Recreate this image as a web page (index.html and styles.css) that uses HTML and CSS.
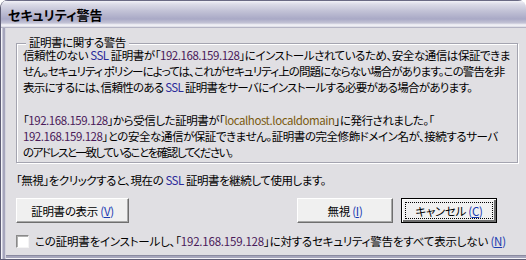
FILE: index.html
```html
<!DOCTYPE html>
<html lang="ja">
<head>
  <meta charset="UTF-8">
  <title>セキュリティ警告</title>
  <link rel="stylesheet" href="styles.css">
</head>
<body>
  <div class="window">
    <div class="titlebar">セキュリティ警告</div>
    <div class="client">
      <div class="group">
        <div class="group-title">証明書に関する警告</div>
        <p class="para">
          <span class="ln">信頼性のない <span class="ssl">SSL</span> 証明書が「<span class="ip">192.168.159.128</span>」にインストールされているため、安全な通信は保証できま</span>
          <span class="ln tight">せん。セキュリティ ポリシーによっては、これがセキュリティ上の問題にならない場合があります。この警告を非</span>
          <span class="ln snug">表示にするには、信頼性のある <span class="ssl">SSL</span> 証明書をサーバにインストールする必要がある場合があります。</span>
        </p>
        <p class="para second">
          <span class="ln">「<span class="ip">192.168.159.128</span>」から受信した証明書が「<span class="host">localhost.localdomain</span>」に発行されました。「</span>
          <span class="ln"><span class="ip">192.168.159.128</span>」との安全な通信が保証できません。証明書の完全修飾ドメイン名が、接続するサーバ</span>
          <span class="ln narrow">のアドレスと一致していることを確認してください。</span>
        </p>
      </div>
      <p class="note">「無視」をクリックすると、現在の <span class="ssl">SSL</span> 証明書を継続して使用します。</p>
      <div class="buttons">
        <button class="btn btn-view">証明書の表示 <span class="key">(<u>V</u>)</span></button>
        <button class="btn btn-ignore">無視 <span class="key">(<u>I</u>)</span></button>
        <button class="btn btn-cancel">キャンセル <span class="key">(<u>C</u>)</span></button>
      </div>
      <label class="check">
        <span class="box"></span>
        <span>この証明書をインストールし、「<span class="ip">192.168.159.128</span>」に対するセキュリティ警告をすべて表示しない <span class="key">(<u>N</u>)</span></span>
      </label>
    </div>
  </div>
</body>
</html>
```

FILE: styles.css
```css
body {
  margin: 0;
  background: #ffffff;
  font-family: "Noto Sans CJK JP", sans-serif;
  font-size: 11.5px;
  letter-spacing: -0.45px;
  color: #000;
}
.window {
  width: 526px;
  height: 260px;
  box-sizing: border-box;
  display: flex;
  flex-direction: column;
  background: #e0dfe3;
  border-left: 1px solid #5e5e76;
  border-bottom: 1px solid #5e5e76;
  border-radius: 8px 8px 0 0;
  overflow: hidden;
  box-shadow: inset 1px 0 #f4f4f8, inset 2px 0 #c8c8d8, inset 4px 0 #a6a6bc, inset 5px 0 #d4d4de,
    inset 0 -1px #f4f4f8, inset 0 -3px #a6a6bc, inset 0 -4px #8a8aa0;
}
.titlebar {
  height: 28px;
  flex: none;
  box-sizing: border-box;
  padding-left: 7px;
  display: flex;
  align-items: center;
  font-weight: bold;
  font-size: 13px;
  letter-spacing: 0;
  font-feature-settings: "palt";
  border-top: 1px solid #6a6a84;
  border-bottom: 1px solid #b4b4c4;
  background: linear-gradient(#f2f2f8 0, #dcdce8 3px, #c2c2d6 10px, #a9a9c6 18px, #c4c4d6 22px, #f6f6fa 24px, #dadae4 26px);
}
.client {
  flex: 1;
  padding: 15px 0 0 15px;
  font-feature-settings: "palt";
}
.group {
  width: 502px;
  box-sizing: border-box;
  padding: 0 6px 2px;
  border: 1px solid #a4a4b0;
  box-shadow: 1px 1px #fff, inset 1px 1px #fff;
}
.group-title {
  width: fit-content;
  margin: -7px 0 0 3px;
  padding: 0 3px;
  line-height: 10px;
  background: #e0dfe3;
}
.para {
  margin: 0;
  line-height: 16px;
}
.para.second {
  margin-top: 17px;
}
.ln {
  display: block;
  white-space: nowrap;
}
.ln.tight { letter-spacing: -0.9px; }
.ln.snug { letter-spacing: -0.7px; }
.ln.narrow { letter-spacing: -1.5px; }
.ssl { color: #2a2a9a; }
.ip { color: #4a1a5a; }
.host { color: #7a5a10; }
.key { color: #1a3ab0; }
.note {
  margin: 9px 0 0;
  line-height: 16px;
}
.buttons {
  margin-top: 10px;
  display: flex;
  gap: 8px;
}
.btn {
  height: 25px;
  font-family: inherit;
  font-size: 11.5px;
  letter-spacing: -0.3px;
  font-feature-settings: "palt";
  color: #000;
  background: #f0f0f0;
  border: 1px solid;
  border-color: #ffffff #6e6e6e #6e6e6e #ffffff;
  box-shadow: inset -1px -1px #a8a8a8;
  padding: 0;
}
.btn-view { width: 113px; }
.btn-ignore { width: 96px; margin-left: auto; }
.btn-cancel {
  width: 96px;
  margin-right: 29px;
  border-color: #000;
  box-shadow: inset 1px 1px #fff, inset -2px -2px #6e6e6e;
  outline: 1px dotted #000;
  outline-offset: -5px;
}
.check {
  margin-top: 10px;
  display: flex;
  align-items: center;
  gap: 6px;
  line-height: 16px;
  letter-spacing: -0.2px;
  white-space: nowrap;
}
.box {
  width: 11px;
  height: 11px;
  background: #fff;
  border: 1px solid;
  border-color: #8a8a8a #f4f4f4 #f4f4f4 #8a8a8a;
  box-shadow: inset 1px 1px #b0b0b0;
}
```
